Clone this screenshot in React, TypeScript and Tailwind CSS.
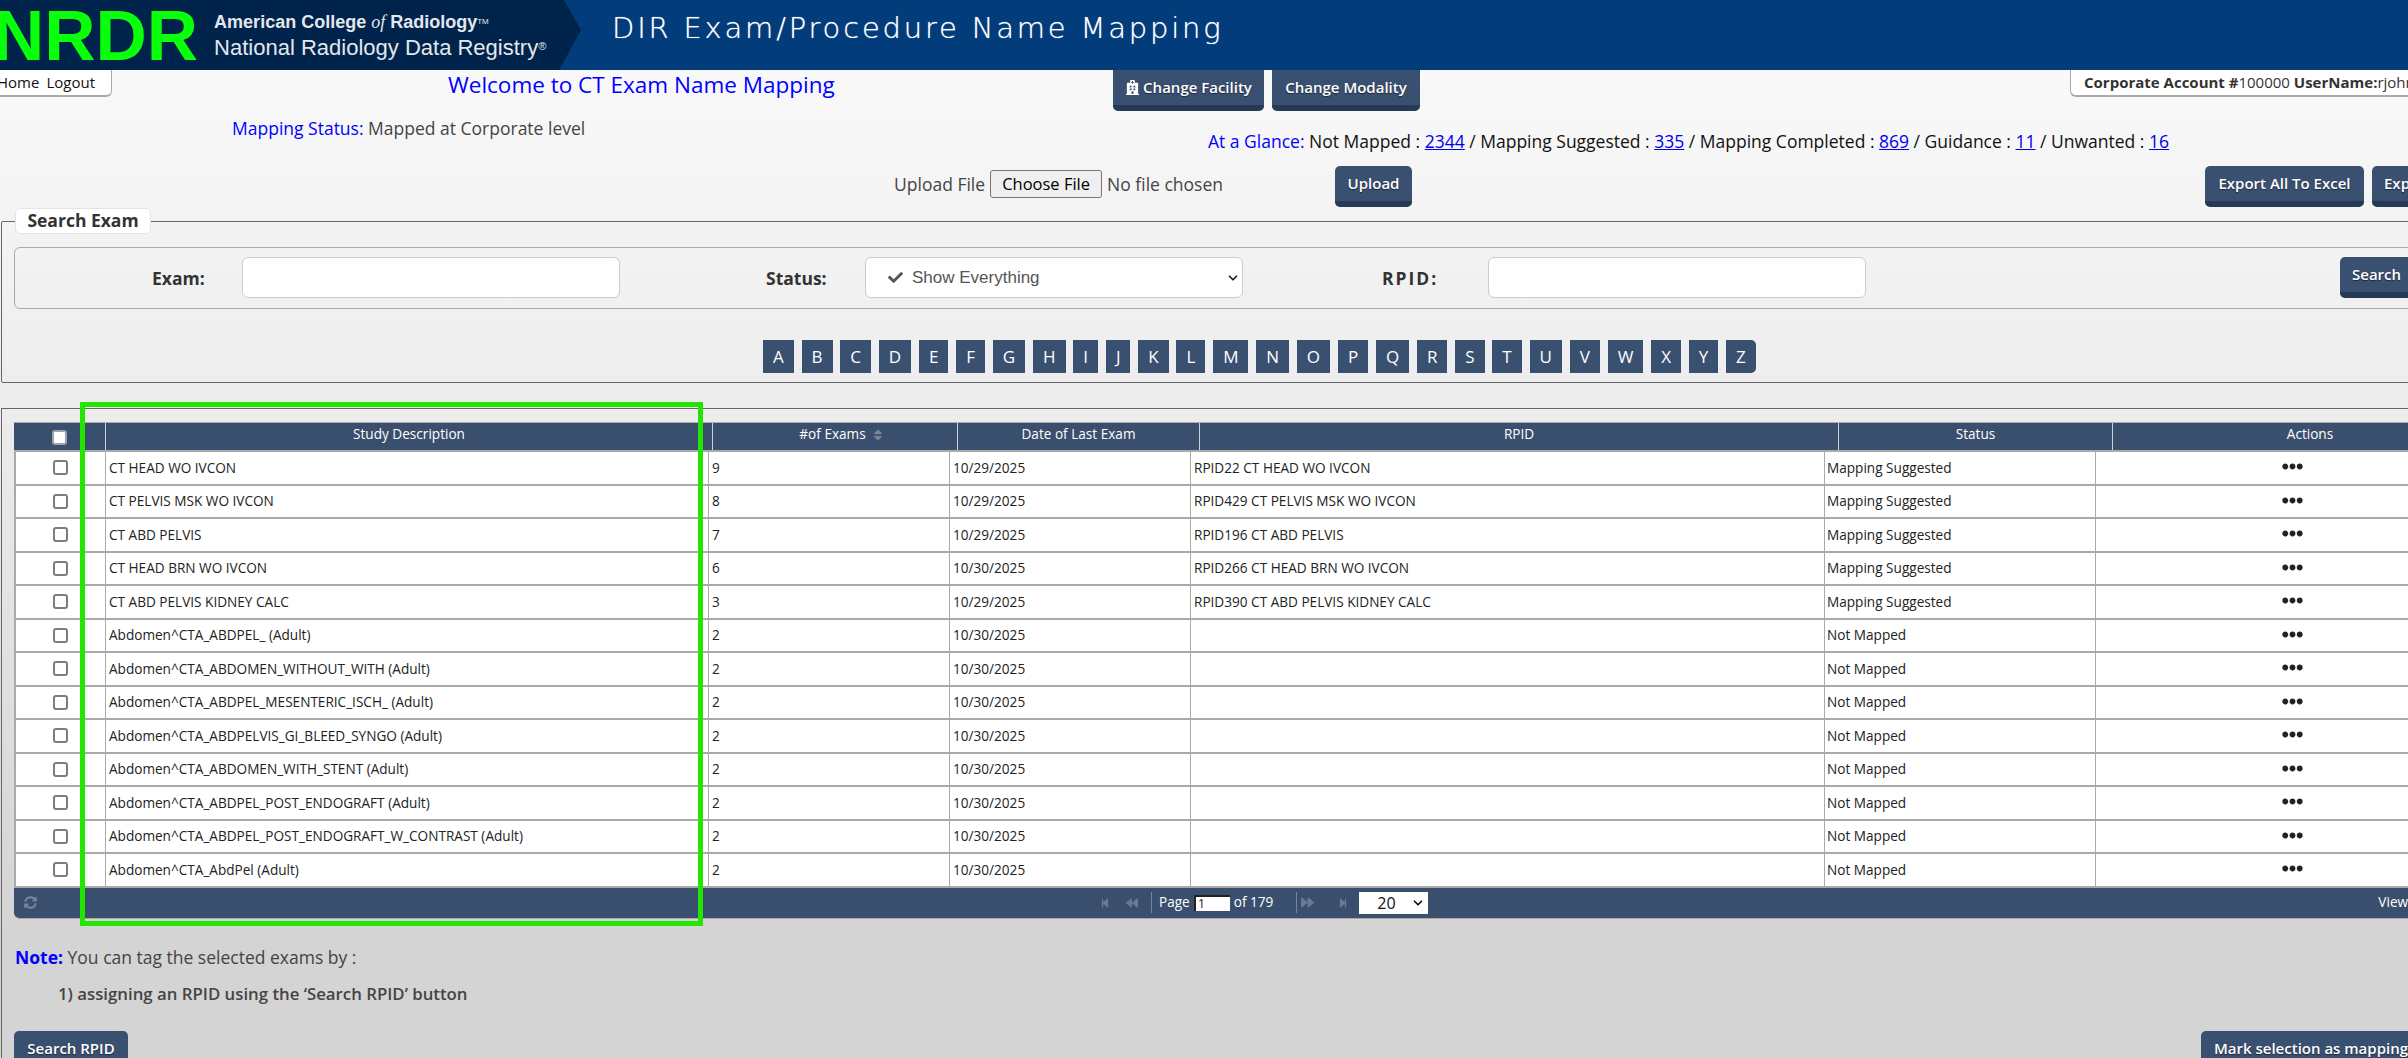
import { ChevronDown } from "lucide-react";
import {
  FaBackward,
  FaCheck,
  FaEllipsisH,
  FaForward,
  FaHospital,
  FaSort,
  FaStepBackward,
  FaStepForward,
  FaSyncAlt,
} from "react-icons/fa";

const sans = "font-['Open_Sans',sans-serif]";
const arial = "font-['Liberation_Sans',Arial,sans-serif]";

const letters = "ABCDEFGHIJKLMNOPQRSTUVWXYZ".split("");

const rows = [
  ["CT HEAD WO IVCON", "9", "10/29/2025", "RPID22 CT HEAD WO IVCON", "Mapping Suggested"],
  ["CT PELVIS MSK WO IVCON", "8", "10/29/2025", "RPID429 CT PELVIS MSK WO IVCON", "Mapping Suggested"],
  ["CT ABD PELVIS", "7", "10/29/2025", "RPID196 CT ABD PELVIS", "Mapping Suggested"],
  ["CT HEAD BRN WO IVCON", "6", "10/30/2025", "RPID266 CT HEAD BRN WO IVCON", "Mapping Suggested"],
  ["CT ABD PELVIS KIDNEY CALC", "3", "10/29/2025", "RPID390 CT ABD PELVIS KIDNEY CALC", "Mapping Suggested"],
  ["Abdomen^CTA_ABDPEL_ (Adult)", "2", "10/30/2025", "", "Not Mapped"],
  ["Abdomen^CTA_ABDOMEN_WITHOUT_WITH (Adult)", "2", "10/30/2025", "", "Not Mapped"],
  ["Abdomen^CTA_ABDPEL_MESENTERIC_ISCH_ (Adult)", "2", "10/30/2025", "", "Not Mapped"],
  ["Abdomen^CTA_ABDPELVIS_GI_BLEED_SYNGO (Adult)", "2", "10/30/2025", "", "Not Mapped"],
  ["Abdomen^CTA_ABDOMEN_WITH_STENT (Adult)", "2", "10/30/2025", "", "Not Mapped"],
  ["Abdomen^CTA_ABDPEL_POST_ENDOGRAFT (Adult)", "2", "10/30/2025", "", "Not Mapped"],
  ["Abdomen^CTA_ABDPEL_POST_ENDOGRAFT_W_CONTRAST (Adult)", "2", "10/30/2025", "", "Not Mapped"],
  ["Abdomen^CTA_AbdPel (Adult)", "2", "10/30/2025", "", "Not Mapped"],
];

function Btn({ children, className = "" }: { children: React.ReactNode; className?: string }) {
  return (
    <button
      className={`flex shrink-0 items-center justify-center rounded-[5px] border-b-[6px] border-[#253a55] bg-[#3a5070] text-[15px] font-semibold text-white [text-shadow:0_1px_1px_rgba(0,0,0,0.5)] ${className}`}
    >
      {children}
    </button>
  );
}

function Check({ head }: { head?: boolean }) {
  return (
    <span
      className={`block h-[15px] w-[15px] rounded-[3px] border-2 bg-white ${head ? "border-[#9aa3af]" : "border-[#7d7d7d]"}`}
    />
  );
}

function Link({ children }: { children: React.ReactNode }) {
  return <a className="text-[#0000ee] underline">{children}</a>;
}

export default function App() {
  return (
    <div
      className={`relative h-[1058px] w-[2408px] overflow-hidden bg-[linear-gradient(to_bottom,#f9f9f9_70px,#ececec_420px,#d4d4d4_930px)] ${sans}`}
    >
      {/* banner */}
      <header className="flex h-[70px] bg-[#023c7a]">
        <div className="flex h-[70px] w-[581px] shrink-0 items-center bg-[#00234b] [clip-path:polygon(0_0,564px_0,581px_30px,559px_100%,0_100%)]">
          <span className={`-ml-[7px] text-[71px] leading-none font-bold text-[#0aff0a] ${arial}`}>NRDR</span>
          <div className={`ml-[16px] leading-[25px] text-[#e3e8ec] ${arial}`}>
            <div className="text-[18px] font-bold whitespace-nowrap">
              American College <i className="font-['Liberation_Serif',serif] font-normal">of</i> Radiology
              <sup className="text-[8px] font-normal">TM</sup>
            </div>
            <div className="text-[22px] whitespace-nowrap">
              National Radiology Data Registry<sup className="text-[11px]">®</sup>
            </div>
          </div>
        </div>
        <h1 className="mt-[11px] ml-[31px] font-['DejaVu_Sans',sans-serif] text-[29px] leading-[34px] font-extralight tracking-[2.8px] whitespace-nowrap text-white [text-shadow:0_0_1px_rgba(255,255,255,0.7)]">
          DIR Exam/Procedure Name Mapping
        </h1>
      </header>

      {/* top row */}
      <div className="flex h-[41px] items-start">
        <div className="flex h-[27px] w-[112px] shrink-0 items-center gap-[7px] overflow-hidden rounded-br-[6px] border-r border-b-2 border-[#aaa] bg-white text-[15px] text-[#111]">
          <span className="-ml-[3px]">Home</span>
          <span>Logout</span>
        </div>
        <div className="ml-[336px] w-[665px] shrink-0 text-[22.5px] leading-[30px] whitespace-nowrap text-[#0000ff]">
          Welcome to CT Exam Name Mapping
        </div>
        <Btn className="h-[41px] w-[151px] gap-[3px] rounded-t-none">
          <FaHospital size={15} />
          Change Facility
        </Btn>
        <Btn className="ml-[8px] h-[41px] w-[148px] rounded-t-none">Change Modality</Btn>
        <div className="ml-[650px] flex h-[27px] w-[400px] shrink-0 items-center rounded-bl-[6px] border-b-2 border-l border-[#aaa] bg-white pl-[13px] text-[15px] whitespace-nowrap text-[#333]">
          <b>Corporate Account #</b>100000&nbsp;<b>UserName:</b>rjohnson
        </div>
      </div>

      {/* status row */}
      <div className="flex h-[55px] items-start text-[17.5px] leading-[24px] whitespace-nowrap">
        <div className="mt-[5px] ml-[232px] w-[976px] shrink-0 text-[#444]">
          <span className="text-[#0000ff]">Mapping Status:</span> Mapped at Corporate level
        </div>
        <div className="mt-[18px] text-[#111]">
          <span className="text-[#0000ff]">At a Glance:</span> Not Mapped : <Link>2344</Link> / Mapping Suggested :{" "}
          <Link>335</Link> / Mapping Completed : <Link>869</Link> / Guidance : <Link>11</Link> / Unwanted :{" "}
          <Link>16</Link>
        </div>
      </div>

      {/* upload row */}
      <div className="flex h-[42px] items-start text-[17.5px] whitespace-nowrap text-[#444]">
        <div className="mt-[4px] ml-[894px] flex h-[28px] w-[441px] shrink-0 items-center">
          Upload File
          <button className="mx-[5px] h-[28px] w-[112px] shrink-0 rounded-[3px] border border-[#767676] bg-[#efefef] text-[16.5px] text-black">
            Choose File
          </button>
          No file chosen
        </div>
        <Btn className="h-[41px] w-[77px]">Upload</Btn>
        <Btn className="ml-[793px] h-[41px] w-[159px]">Export All To Excel</Btn>
        <Btn className="ml-[8px] h-[41px] w-[170px] justify-start pl-[12px]">Export Selected</Btn>
      </div>

      {/* search box */}
      <section className="relative mt-[13px] ml-[1px] h-[162px] w-[2600px] rounded-[2px] border border-[#666]">
        <div className="absolute -top-[14px] left-[13px] flex h-[26px] w-[136px] items-center justify-center rounded-[5px] border border-[#e4e4e4] bg-white pb-[1px] text-[17.5px] font-bold text-[#333]">
          Search Exam
        </div>
        <div className="mt-[25px] ml-[12px] flex h-[62px] items-start rounded-[6px] border border-[#aaa] pt-[9px] text-[17.5px] font-bold text-[#333]">
          <label className="mt-[8px] ml-[137px] w-[90px] shrink-0">Exam:</label>
          <input className="h-[41px] w-[378px] shrink-0 rounded-[6px] border border-[#ccc] bg-white" />
          <label className="mt-[8px] ml-[146px] w-[99px] shrink-0">Status:</label>
          <div
            className={`flex h-[41px] w-[378px] shrink-0 items-center rounded-[6px] border border-[#ccc] bg-white pr-[2px] pl-[22px] text-[17px] font-normal text-[#555] ${arial}`}
          >
            <FaCheck size={15} className="mr-[9px]" />
            Show Everything
            <ChevronDown size={14} strokeWidth={3} className="ml-auto text-[#222]" />
          </div>
          <label className="mt-[8px] ml-[139px] w-[106px] shrink-0 tracking-[2px]">RPID:</label>
          <input className="h-[41px] w-[378px] shrink-0 rounded-[6px] border border-[#ccc] bg-white" />
          <Btn className="ml-[474px] h-[41px] w-[90px] justify-start pl-[12px]">Search</Btn>
        </div>
        <nav className="mt-[31px] ml-[761px] flex gap-[7.8px]">
          {letters.map((l) => (
            <a
              key={l}
              className={`flex h-[33px] items-center bg-[#3a5070] px-[10px] text-[17px] text-white ${l === "Z" ? "rounded-r-[5px]" : ""}`}
            >
              {l}
            </a>
          ))}
        </nav>
      </section>

      {/* grid */}
      <section className="mt-[25px] ml-[1px] h-[700px] w-[2600px] border border-[#666] pt-[13px] pl-[12px]">
        <div className="w-max text-[13.6px] text-[#222]">
          <div className="grid h-[30px] grid-cols-[92px_607px_245px_242px_639px_274px_394px] border-t border-b-2 border-[#aaa] bg-[#3a4f6e] text-white">
            <div className="flex items-center justify-center border-r border-[#ccd2da] pt-[2px]">
              <Check head />
            </div>
            <div className="flex items-center justify-center border-r border-[#ccd2da] pb-[4px]">Study Description</div>
            <div className="flex items-center justify-center gap-[5px] border-r border-[#ccd2da] pb-[4px] pl-[14px]">
              #of Exams <FaSort size={14} className="text-[#77849a]" />
            </div>
            <div className="flex items-center justify-center border-r border-[#ccd2da] pb-[4px]">Date of Last Exam</div>
            <div className="flex items-center justify-center border-r border-[#ccd2da] pb-[4px]">RPID</div>
            <div className="flex items-center justify-center border-r border-[#ccd2da] pb-[4px]">Status</div>
            <div className="flex items-center justify-center pb-[4px]">Actions</div>
          </div>
          {rows.map((r) => (
            <div
              key={r[0]}
              className="grid h-[33.5px] grid-cols-[90px_603px_241px_241px_634px_271px_392px] border-b-2 border-l-2 border-[#aaa] bg-white"
            >
              <div className="flex items-center justify-center border-r border-[#aaa]">
                <Check />
              </div>
              <div className="flex items-center border-r border-[#aaa] pl-[3px]">{r[0]}</div>
              <div className="flex items-center border-r border-[#aaa] pl-[3px]">{r[1]}</div>
              <div className="flex items-center border-r border-[#aaa] pl-[3px]">{r[2]}</div>
              <div className="flex items-center border-r border-[#aaa] pl-[3px]">{r[3]}</div>
              <div className="flex items-center border-r border-[#aaa] pl-[2px]">{r[4]}</div>
              <div className="flex items-start justify-center pt-[4px]">
                <FaEllipsisH size={21} className="text-[#222]" />
              </div>
            </div>
          ))}
          <div className="flex h-[31px] w-[2560px] items-center rounded-bl-[6px] border-b border-[#aaa] bg-[#3a4f6e] whitespace-nowrap text-white">
            <FaSyncAlt size={13} className="ml-[10px] text-[#77849a]" />
            <FaStepBackward size={10} className="ml-[1063px] text-[#6b7a92]" />
            <FaBackward size={12} className="ml-[16px] text-[#6b7a92]" />
            <span className="ml-[13px] h-[21px] w-[1px] bg-[#77849a]" />
            <span className="ml-[7px]">Page</span>
            <span className="mx-[4px] h-[16px] w-[36px] border-t-2 border-l-2 border-[#222] bg-white pl-[2px] text-[13px] leading-[13px] text-[#222]">
              1
            </span>
            <span>of 179</span>
            <span className="ml-[23px] h-[21px] w-[1px] bg-[#77849a]" />
            <FaForward size={13} className="ml-[4px] text-[#6b7a92]" />
            <FaStepForward size={10} className="ml-[24px] text-[#6b7a92]" />
            <span className="ml-[11px] flex h-[22px] w-[69px] items-center justify-between bg-white pr-[3px] pl-[18px] text-[16px] text-[#111]">
              20
              <ChevronDown size={14} strokeWidth={3} />
            </span>
            <span className="ml-[950px]">View 1 - 20 of 3575</span>
          </div>
        </div>

        <p className="mt-[26px] ml-[1px] text-[17.5px] leading-[24px] text-[#444]">
          <b className="text-[#0000ff]">Note:</b> You can tag the selected exams by :
        </p>
        <p className="mt-[13px] ml-[44px] text-[16.8px] leading-[24px] font-semibold text-[#444]">
          1) assigning an RPID using the ‘Search RPID’ button
        </p>
        <div className="mt-[25px] flex">
          <Btn className="h-[41px] w-[114px]">Search RPID</Btn>
          <Btn className="ml-[2073px] h-[41px] w-[300px] justify-start pl-[13px]">Mark selection as mapping</Btn>
        </div>
      </section>

      {/* green highlight drawn over the screenshot */}
      <div className="pointer-events-none absolute top-[402px] left-[80px] h-[524px] w-[623px] border-[5px] border-[#22e600]" />
    </div>
  );
}
